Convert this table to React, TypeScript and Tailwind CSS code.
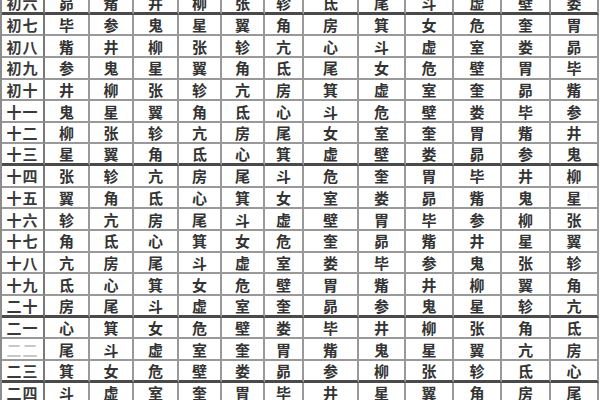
const ROWS: [string, string[]][] = [
  ["初六", ["昴", "觜", "井", "柳", "张", "轸", "氐", "尾", "斗", "虚", "壁", "娄"]],
  ["初七", ["毕", "参", "鬼", "星", "翼", "角", "房", "箕", "女", "危", "奎", "胃"]],
  ["初八", ["觜", "井", "柳", "张", "轸", "亢", "心", "斗", "虚", "室", "娄", "昴"]],
  ["初九", ["参", "鬼", "星", "翼", "角", "氐", "尾", "女", "危", "壁", "胃", "毕"]],
  ["初十", ["井", "柳", "张", "轸", "亢", "房", "箕", "虚", "室", "奎", "昴", "觜"]],
  ["十一", ["鬼", "星", "翼", "角", "氐", "心", "斗", "危", "壁", "娄", "毕", "参"]],
  ["十二", ["柳", "张", "轸", "亢", "房", "尾", "女", "室", "奎", "胃", "觜", "井"]],
  ["十三", ["星", "翼", "角", "氐", "心", "箕", "虚", "壁", "娄", "昴", "参", "鬼"]],
  ["十四", ["张", "轸", "亢", "房", "尾", "斗", "危", "奎", "胃", "毕", "井", "柳"]],
  ["十五", ["翼", "角", "氐", "心", "箕", "女", "室", "娄", "昴", "觜", "鬼", "星"]],
  ["十六", ["轸", "亢", "房", "尾", "斗", "虚", "壁", "胃", "毕", "参", "柳", "张"]],
  ["十七", ["角", "氐", "心", "箕", "女", "危", "奎", "昴", "觜", "井", "星", "翼"]],
  ["十八", ["亢", "房", "尾", "斗", "虚", "室", "娄", "毕", "参", "鬼", "张", "轸"]],
  ["十九", ["氐", "心", "箕", "女", "危", "壁", "胃", "觜", "井", "柳", "翼", "角"]],
  ["二十", ["房", "尾", "斗", "虚", "室", "奎", "昴", "参", "鬼", "星", "轸", "亢"]],
  ["二一", ["心", "箕", "女", "危", "壁", "娄", "毕", "井", "柳", "张", "角", "氐"]],
  ["二二", ["尾", "斗", "虚", "室", "奎", "胃", "觜", "鬼", "星", "翼", "亢", "房"]],
  ["二三", ["箕", "女", "危", "壁", "娄", "昴", "参", "柳", "张", "轸", "氐", "心"]],
  ["二四", ["斗", "虚", "室", "奎", "胃", "毕", "井", "星", "翼", "角", "房", "尾"]],
];

// rows whose bottom line is drawn heavy in the scan
const HEAVY = ["初六", "十三", "二十", "二三"];

export default function App() {
  return (
    <div
      className="w-[600px] h-[400px] overflow-hidden bg-white"
      style={{ fontFamily: '"Noto Sans CJK SC", "Noto Sans CJK TC", sans-serif' }}
    >
      <div className="mt-[-7px] w-[597px] border-l-2 border-[#8c8c8c] grid grid-cols-[43px_45px_44px_45px_43px_43px_39px_55px_47px_48px_48px_49px_48px]">
        {ROWS.map(([day, cells]) => {
          const heavy = HEAVY.includes(day);
          const line = heavy ? "border-b-[3px] border-b-[#4a4a4a]" : "border-b-2 border-b-[#999999]";
          return [
            <div
              key={day}
              className={`h-[21.65px] flex items-center justify-center border-r-2 border-r-[#7a7a7a] ${line} text-[15px] font-bold leading-none tracking-[1px] ${
                day === "二二" ? "text-[#c8c8c8]" : "text-[#3a3a3a]"
              }`}
            >
              {day}
            </div>,
            ...cells.map((c, i) => (
              <div
                key={day + i}
                className={`h-[21.65px] flex items-center justify-center border-r-2 border-r-[#999999] ${line} text-[15px] font-bold leading-none text-[#333333]`}
              >
                {c}
              </div>
            )),
          ];
        })}
      </div>
    </div>
  );
}
